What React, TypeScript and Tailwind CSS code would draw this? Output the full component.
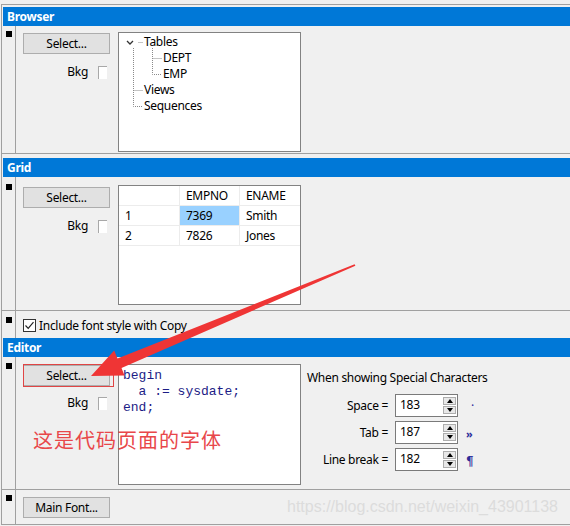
import React from "react";

function Gutter({ sq }: { sq: string }) {
  return (
    <div className="flex w-[14px] shrink-0 border-r border-[#a0a0a0]">
      <div className={"ml-[4px] w-[6px] h-[6px] bg-black " + sq} />
    </div>
  );
}

function Header({ title }: { title: string }) {
  return (
    <div className="ml-[1px] h-[19px] shrink-0 bg-[#0078d7] pl-[4px] text-[12px] font-bold leading-[19px] text-white">
      {title}
    </div>
  );
}

function Btn({ label }: { label: string }) {
  return (
    <div className="flex h-[21px] w-[87px] items-center justify-center border border-[#adadad] bg-[#e1e1e1] text-[12px] leading-none">
      {label}
    </div>
  );
}

function BkgRow({ cls }: { cls: string }) {
  return (
    <div className={"flex w-[87px] items-center justify-end pr-[3px] " + cls}>
      <span className="mr-[10px] leading-none">Bkg</span>
      <div className="h-[13px] w-[9px] border-l border-t border-[#a8a8a8] bg-white" />
    </div>
  );
}

function Spinner({ value }: { value: string }) {
  return (
    <div className="flex h-[23px] w-[63px] border border-[#7a7a7a] bg-white">
      <div className="flex-1 pl-[4px] text-[12px] leading-[19px]">{value}</div>
      <div className="my-[2px] mr-[1px] flex w-[13px] flex-col gap-[1px]">
        <div className="flex flex-1 items-center justify-center border border-[#adadad] bg-[#e8e8e8]">
          <div className="h-0 w-0 border-x-[3px] border-b-[4px] border-x-transparent border-b-black" />
        </div>
        <div className="flex flex-1 items-center justify-center border border-[#adadad] bg-[#e8e8e8]">
          <div className="h-0 w-0 border-x-[3px] border-t-[4px] border-x-transparent border-t-black" />
        </div>
      </div>
    </div>
  );
}

function Tree() {
  return (
    <div className="relative h-[120px] w-[183px] border border-[#828282] bg-white">
      <svg className="absolute left-0 top-0" width="181" height="118">
        <path d="M8 8 L11 11 L14 8" fill="none" stroke="#333" strokeWidth="1.3" />
        <g stroke="#8a8a8a" strokeWidth="1" strokeDasharray="1 1" fill="none">
          <path d="M19.5 9.5 H24" />
          <path d="M14.5 15 V73.5 H24" />
          <path d="M14.5 57.5 H24" />
          <path d="M33.5 15 V41.5 H43" />
          <path d="M33.5 25.5 H43" />
        </g>
      </svg>
      <div className="relative pt-[1px] text-[12px] leading-[16px]">
        <div className="pl-[25px]">Tables</div>
        <div className="pl-[44px]">DEPT</div>
        <div className="pl-[44px]">EMP</div>
        <div className="pl-[25px]">Views</div>
        <div className="pl-[25px]">Sequences</div>
      </div>
    </div>
  );
}

function Grid() {
  const rows = [
    ["", "EMPNO", "ENAME"],
    ["1", "7369", "Smith"],
    ["2", "7826", "Jones"],
  ];
  return (
    <div className="h-[120px] w-[183px] border border-[#828282] bg-white">
      {rows.map((r, i) => (
        <div key={i} className="flex h-[20px] border-b border-[#ececec]">
          <div className="w-[61px] border-r border-[#ececec] pl-[6px] leading-[19px]">{r[0]}</div>
          <div
            className={
              "w-[60px] border-r border-[#ececec] pl-[6px] leading-[19px] " +
              (i === 1 ? "bg-[#99d1ff]" : "")
            }
          >
            {r[1]}
          </div>
          <div className="flex-1 pl-[6px] leading-[19px]">{r[2]}</div>
        </div>
      ))}
    </div>
  );
}

export default function App() {
  return (
    <div className="relative h-[526px] w-[570px] overflow-hidden bg-[#f0f0f0] font-['Noto_Sans',sans-serif] text-[12px] tracking-[-0.3px] text-black">
      <div className="pt-[4px]">
        <div className="ml-[1px] flex h-[521px] flex-col border-y border-l border-[#a0a0a0]">
          <div className="h-[2px] shrink-0" />
          <Header title="Browser" />
          <div className="flex h-[127px] shrink-0">
            <Gutter sq="mt-[5px]" />
            <div className="flex pl-[7px] pt-[6px]">
              <div className="flex flex-col">
                <div className="mt-[1px]">
                  <Btn label="Select..." />
                </div>
                <BkgRow cls="mt-[11px] h-[14px]" />
              </div>
              <div className="ml-[8px]">
                <Tree />
              </div>
            </div>
          </div>
          <div className="h-[1px] shrink-0 bg-[#a0a0a0]" />
          <div className="h-[4px] shrink-0" />
          <Header title="Grid" />
          <div className="flex h-[133px] shrink-0">
            <Gutter sq="mt-[7px]" />
            <div className="flex pl-[7px] pt-[8px]">
              <div className="flex flex-col">
                <div className="mt-[2px]">
                  <Btn label="Select..." />
                </div>
                <BkgRow cls="mt-[11px] h-[14px]" />
              </div>
              <div className="ml-[8px]">
                <Grid />
              </div>
            </div>
          </div>
          <div className="h-[1px] shrink-0 bg-[#a0a0a0]" />
          <div className="flex h-[27px] shrink-0">
            <Gutter sq="mt-[6px]" />
            <div className="flex items-start pl-[7px] pt-[8px]">
              <div className="flex h-[13px] w-[13px] items-center justify-center border border-[#333] bg-white">
                <svg width="11" height="11" viewBox="0 0 11 11">
                  <path d="M1.5 5.5 L4.2 8.3 L9.5 2.2" fill="none" stroke="#222" strokeWidth="1.2" />
                </svg>
              </div>
              <span className="ml-[3px] leading-[13px]">Include font style with Copy</span>
            </div>
          </div>
          <Header title="Editor" />
          <div className="flex h-[132px] shrink-0">
            <Gutter sq="mt-[6px]" />
            <div className="flex pl-[7px] pt-[7px]">
              <div className="flex flex-col">
                <div className="mt-[1px]">
                  <Btn label="Select..." />
                </div>
                <BkgRow cls="mt-[10px] h-[14px]" />
              </div>
              <div className="ml-[8px] h-[121px] w-[183px] border border-[#828282] bg-white pl-[4px] pt-[3px] font-['Liberation_Mono',monospace] text-[13px] leading-[16px] tracking-normal text-[#1c1c86] whitespace-pre">
                <div>begin</div>
                <div>{"  a := sysdate;"}</div>
                <div>end;</div>
              </div>
              <div className="ml-[6px] flex flex-col">
                <div className="mt-[6px] leading-[16px]">When showing Special Characters</div>
                <div className="mt-[8px] flex flex-col gap-[4px]">
                  <div className="flex items-center">
                    <div className="w-[81px] text-right">Space =</div>
                    <div className="ml-[7px]">
                      <Spinner value="183" />
                    </div>
                    <div className="ml-[13px] text-[#2c2c9a]">·</div>
                  </div>
                  <div className="flex items-center">
                    <div className="w-[81px] text-right">Tab =</div>
                    <div className="ml-[7px]">
                      <Spinner value="187" />
                    </div>
                    <div className="ml-[8px] mt-[4px] text-[11px] font-bold text-[#2c2c9a]">»</div>
                  </div>
                  <div className="flex items-center">
                    <div className="w-[81px] text-right">Line break =</div>
                    <div className="ml-[7px]">
                      <Spinner value="182" />
                    </div>
                    <div className="ml-[8px] mt-[4px] font-['DejaVu_Serif',serif] text-[12px] font-bold text-[#2c2c9a]">¶</div>
                  </div>
                </div>
              </div>
            </div>
          </div>
          <div className="h-[1px] shrink-0 bg-[#a0a0a0]" />
          <div className="flex h-[34px] shrink-0">
            <Gutter sq="mt-[5px]" />
            <div className="pl-[7px] pt-[7px]">
              <Btn label="Main Font..." />
            </div>
          </div>
        </div>
      </div>

      {/* annotations */}
      <div className="pointer-events-none absolute left-[23px] top-[364px] h-[23px] w-[91px] border border-[#e04545]" />
      <div className="pointer-events-none absolute left-[33px] top-[426px] font-['Noto_Sans_CJK_SC',sans-serif] text-[20px] leading-[28px] tracking-[1px] text-[#e8474a]">
        这是代码页面的字体
      </div>
      <svg className="pointer-events-none absolute left-0 top-0" width="570" height="526">
        <polygon
          points="91,376 114.2,350.5 117.5,358.5 354.6,264.2 355.4,265.8 121.5,368 124.5,375.5"
          fill="#ef3535"
        />
      </svg>
      <div className="pointer-events-none absolute left-[287px] top-[497px] font-['Liberation_Sans',sans-serif] text-[16px] leading-[20px] tracking-normal text-[#dcdcdc]">
        https://blog.csdn.net/weixin_43901138
      </div>
    </div>
  );
}
